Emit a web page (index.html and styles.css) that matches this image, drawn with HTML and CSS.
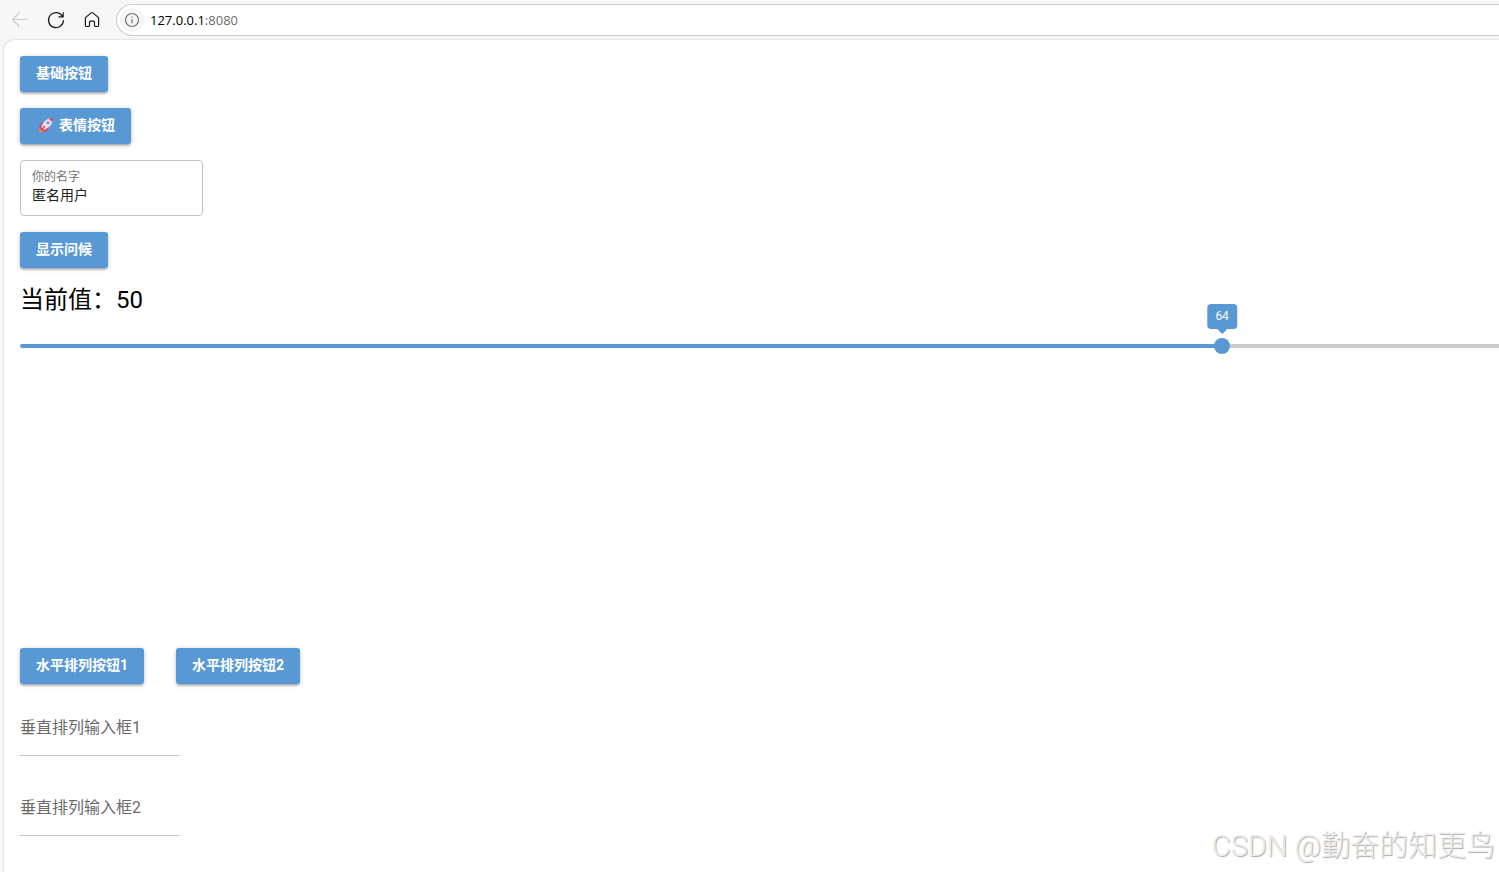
FILE: index.html
```html
<!DOCTYPE html>
<html lang="zh-CN">
<head>
<meta charset="utf-8">
<meta name="viewport" content="width=device-width, initial-scale=1">
<title>127.0.0.1:8080</title>
<link rel="stylesheet" href="styles.css">
</head>
<body>
<header class="toolbar">
  <nav class="toolbar-nav" aria-label="浏览器导航">
    <button class="tool" type="button" aria-label="后退" disabled>
      <svg viewBox="0 0 20 20"><path d="M18 9.5H2.5M9.5 2.5L2.5 9.5l7 7"/></svg>
    </button>
    <button class="tool" type="button" aria-label="刷新">
      <svg viewBox="0 0 20 20"><path d="M16.6 6.6A7.5 7.5 0 1 0 17.5 10.2M17.2 2.2v4.6h-4.8"/></svg>
    </button>
    <button class="tool" type="button" aria-label="主页">
      <svg viewBox="0 0 20 20"><path d="M3.4 8.3Q3.4 7.8 3.8 7.4L9.1 2.9Q10 2.2 10.9 2.9L16.2 7.4Q16.6 7.8 16.6 8.3V15.6Q16.6 16.5 15.7 16.5H13.3Q12.5 16.5 12.5 15.7V12.4Q12.5 11.2 11.3 11.2H8.7Q7.5 11.2 7.5 12.4V15.7Q7.5 16.5 6.7 16.5H4.3Q3.4 16.5 3.4 15.6Z"/></svg>
    </button>
  </nav>
  <div class="address">
    <button class="site-info" type="button" aria-label="网站信息">
      <svg viewBox="0 0 16 16"><circle cx="8" cy="8" r="6.5"/><path d="M8 7.2v4M8 4.5v1.3"/></svg>
    </button>
    <span class="url">127.0.0.1<span class="port">:8080</span></span>
  </div>
</header>
<main class="page">
  <button class="btn" type="button">基础按钮</button>
  <button class="btn" type="button">
    <svg class="rocket" viewBox="0 0 20 20" aria-hidden="true">
      <path fill="#ff8a1f" d="M5.5 12.2L3.2 14.3 3 17.6 6.4 16.8 8.4 14.8Z"/>
      <path fill="#e9376c" d="M8.2 7L5.2 8.2 2.8 12.8 7 11.6ZM13 11.8L12.2 14.8 7.8 17.4 8.6 13.2Z"/>
      <path fill="#e4dce8" d="M17 3C12.4 3 9.4 4.6 7.4 7.8L5 11.8 8.3 15 12.4 12.6C15.6 10.4 17 7.4 17 3Z"/>
      <path fill="#e9376c" d="M17 3Q14.7 3 12.8 3.7L16.3 7.2Q17 5.2 17 3ZM5 11.8L4.2 14.2 6 15.8 8.3 15Z"/>
      <circle cx="12" cy="7.8" r="1.4" fill="#5c92cf"/>
      <path stroke="#e9376c" stroke-width="1.4" d="M8.8 11.2L6.7 13.5"/>
    </svg>
    表情按钮
  </button>
  <div class="field-outlined">
    <label for="name">你的名字</label>
    <input id="name" type="text" value="匿名用户">
  </div>
  <button class="btn" type="button">显示问候</button>
  <h1 class="value-title"><label for="level">当前值：50</label></h1>
  <div class="slider-view">
    <div class="slider">
      <input id="level" type="range" min="0" max="100" value="64">
      <output class="bubble" for="level">64</output>
    </div>
  </div>
  <div class="blank" aria-hidden="true"></div>
  <div class="row">
    <button class="btn" type="button">水平排列按钮1</button>
    <button class="btn" type="button">水平排列按钮2</button>
  </div>
  <div class="column">
    <input class="field-line" type="text" aria-label="垂直排列输入框1" placeholder="垂直排列输入框1">
    <input class="field-line" type="text" aria-label="垂直排列输入框2" placeholder="垂直排列输入框2">
  </div>
</main>
<div class="watermark">CSDN @勤奋的知更鸟</div>
</body>
</html>
```
FILE: styles.css
```css
* {
  box-sizing: border-box;
}

body {
  margin: 0;
  min-height: 100vh;
  display: flex;
  flex-direction: column;
  background: #f7f7f7;
  color: #000;
  font-family: Roboto, "Noto Sans CJK SC", sans-serif;
  font-size: 14px;
}

button,
input {
  font: inherit;
}

.toolbar {
  display: flex;
  align-items: center;
  gap: 14px;
  height: 40px;
  padding-left: 10px;
}

.toolbar-nav {
  display: flex;
  gap: 16px;
}

.tool {
  width: 20px;
  height: 20px;
  padding: 0;
  border: 0;
  background: none;
  color: #1a1a1a;
}

.tool:disabled {
  color: #ccc;
}

.tool svg,
.site-info svg {
  display: block;
  fill: none;
  stroke: currentColor;
  stroke-width: 1.2;
}

.address {
  flex: 1;
  display: flex;
  align-items: center;
  gap: 6px;
  height: 32px;
  padding-left: 3px;
  border: 1px solid #ccc;
  border-right: 0;
  border-radius: 16px 0 0 16px;
  background: #fff;
}

.site-info {
  width: 24px;
  height: 24px;
  padding: 4px;
  border: 0;
  border-radius: 50%;
  background: #f5f5f5;
  color: #707070;
}

.url {
  font-family: "Open Sans", sans-serif;
  font-size: 13px;
}

.port {
  color: #6b6b6b;
}

.page {
  flex: 1;
  display: flex;
  flex-direction: column;
  align-items: flex-start;
  gap: 16px;
  margin-left: 4px;
  padding: 16px 0 16px 16px;
  border-radius: 10px 0 0 0;
  background: #fff;
  box-shadow: 0 0 2px rgba(0, 0, 0, 0.25);
}

.btn {
  display: flex;
  align-items: center;
  gap: 3px;
  height: 36px;
  padding: 0 16px 2px;
  border: 0;
  border-radius: 3px;
  background: #5898d4;
  color: #fff;
  font-weight: 700;
  line-height: 24px;
  box-shadow: 0 1px 5px rgba(0, 0, 0, 0.2), 0 2px 2px rgba(0, 0, 0, 0.14), 0 3px 1px -2px rgba(0, 0, 0, 0.12);
}

.rocket {
  width: 20px;
  height: 20px;
}

.field-outlined {
  display: flex;
  flex-direction: column;
  width: 183px;
  height: 56px;
  padding: 7px 11px;
  border: 1px solid #c2c2c2;
  border-radius: 4px;
}

.field-outlined label {
  color: #757575;
  font-size: 12px;
  line-height: 18px;
}

.field-outlined input {
  width: 100%;
  height: 18px;
  padding: 0;
  border: 0;
  background: none;
  color: #212121;
  line-height: 18px;
}

.value-title {
  margin: 0;
  font-size: 24px;
  font-weight: 400;
  line-height: 32px;
}

/* The slider is wider than its view and is cut at the right edge. */
.slider-view {
  align-self: stretch;
  overflow-x: clip;
  overflow-y: visible;
}

.slider {
  position: relative;
  width: 127.2%;
  height: 28px;
}

.slider input {
  appearance: none;
  display: block;
  width: 100%;
  height: 28px;
  margin: 0;
  background: none;
}

.slider input::-webkit-slider-runnable-track {
  height: 4px;
  border-radius: 2px;
  background: linear-gradient(to right, #5898d4 63.8%, #ccc 63.8%);
}

.slider input::-webkit-slider-thumb {
  appearance: none;
  width: 16px;
  height: 16px;
  margin-top: -6px;
  border-radius: 50%;
  background: #5898d4;
}

.bubble {
  position: absolute;
  bottom: 31px;
  left: 63.9%;
  padding: 0 8px;
  border-radius: 4px;
  background: #5898d4;
  color: #fff;
  font-size: 12px;
  line-height: 25px;
  transform: translateX(-50%);
}

.bubble::after {
  content: "";
  position: absolute;
  top: 100%;
  left: 50%;
  margin-left: -5px;
  border: 5px solid transparent;
  border-top-color: #5898d4;
  border-bottom: 0;
}

.blank {
  height: 256px;
}

.row {
  display: flex;
  gap: 32px;
}

.column {
  display: flex;
  flex-direction: column;
  gap: 24px;
}

.field-line {
  width: 159px;
  height: 56px;
  padding: 0;
  border: 0;
  border-bottom: 1px solid #c2c2c2;
  background: none;
  font-size: 16px;
}

.field-line::placeholder {
  color: #6b6b6b;
  opacity: 1;
}

.watermark {
  position: absolute;
  right: 4px;
  bottom: 4px;
  color: #ececec;
  font-family: Roboto, "Noto Sans CJK SC", sans-serif;
  font-size: 29px;
  font-weight: 300;
  line-height: 44px;
  text-shadow: 1px 1px 1px #aaa;
}
```
